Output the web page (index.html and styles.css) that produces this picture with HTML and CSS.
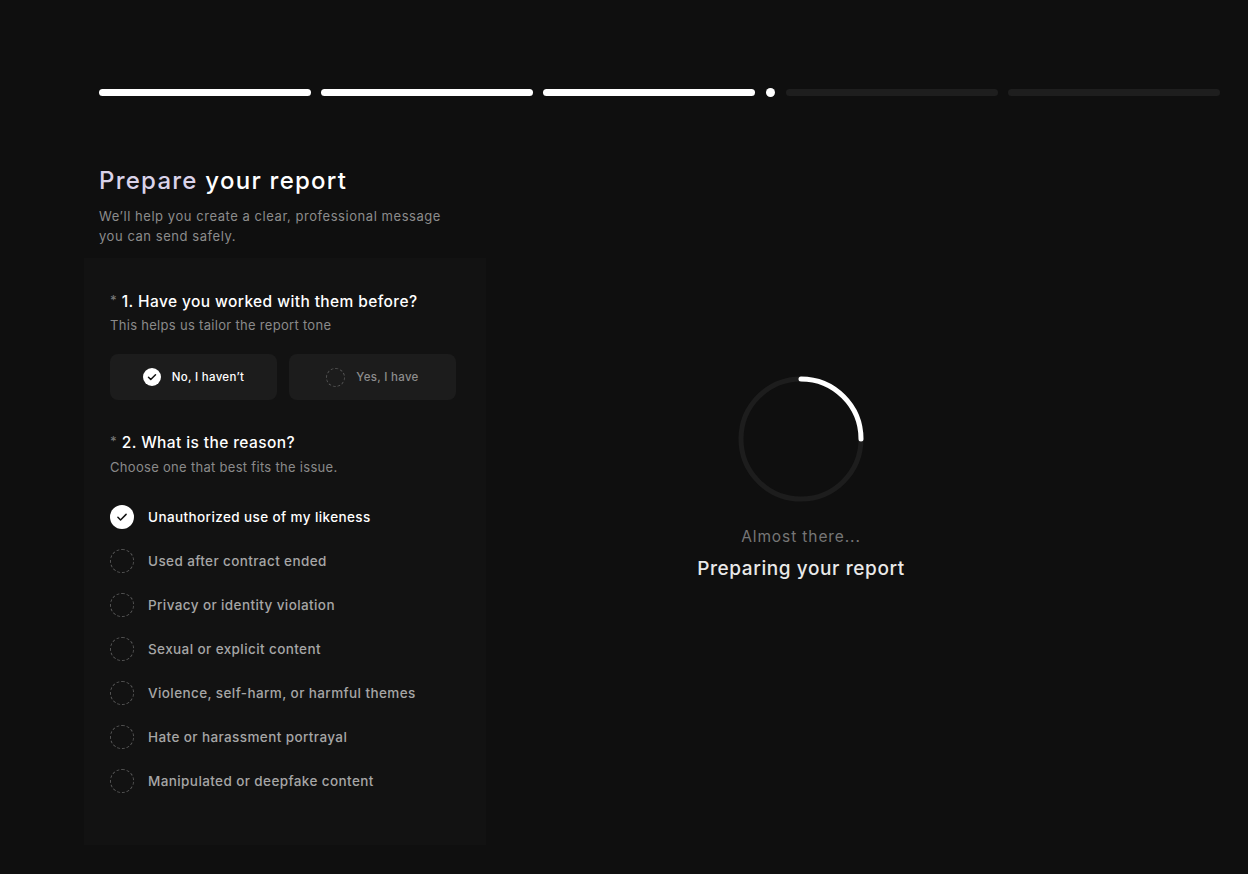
FILE: index.html
```html
<!DOCTYPE html>
<html lang="en">
<head>
  <meta charset="UTF-8" />
  <meta name="viewport" content="width=device-width, initial-scale=1.0" />
  <title>Prepare your report</title>
  <link rel="stylesheet" href="styles.css">
</head>
<body>

<div class="page">
  <!-- step progress -->
  <div class="progress">
    <span class="bar done"></span>
    <span class="bar done"></span>
    <span class="bar done"></span>
    <span class="dot"></span>
    <span class="bar"></span>
    <span class="bar"></span>
  </div>

  <div class="main">
    <div class="left">
      <div class="intro">
        <h1><span class="accent">Prepare</span> your report</h1>
        <p>We’ll help you create a clear, professional message<br>you can send safely.</p>
      </div>

      <div class="card">
        <div class="question">
          <h2><span class="req">*</span> 1. Have you worked with them before?</h2>
          <p class="hint">This helps us tailor the report tone</p>
          <div class="choices">
            <div class="choice selected">
              <span class="tick small">
                <svg viewBox="0 0 24 24" width="12" height="12"><path d="M5 12.5l4.5 4.5L19 7.5" fill="none" stroke="#111" stroke-width="3" stroke-linecap="round" stroke-linejoin="round"/></svg>
              </span>
              No, I haven’t
            </div>
            <div class="choice">
              <span class="ring small"></span>
              Yes, I have
            </div>
          </div>
        </div>

        <div class="question">
          <h2><span class="req">*</span> 2. What is the reason?</h2>
          <p class="hint">Choose one that best fits the issue.</p>
          <ul class="reasons">
            <li class="selected">
              <span class="tick">
                <svg viewBox="0 0 24 24" width="14" height="14"><path d="M5 12.5l4.5 4.5L19 7.5" fill="none" stroke="#111" stroke-width="2.6" stroke-linecap="round" stroke-linejoin="round"/></svg>
              </span>
              Unauthorized use of my likeness
            </li>
            <li><span class="ring"></span>Used after contract ended</li>
            <li><span class="ring"></span>Privacy or identity violation</li>
            <li><span class="ring"></span>Sexual or explicit content</li>
            <li><span class="ring"></span>Violence, self-harm, or harmful themes</li>
            <li><span class="ring"></span>Hate or harassment portrayal</li>
            <li><span class="ring"></span>Manipulated or deepfake content</li>
          </ul>
        </div>
      </div>
    </div>

    <div class="right">
      <svg class="spinner" viewBox="0 0 128 128" width="128" height="128">
        <circle cx="64" cy="64" r="60" fill="none" stroke="#1d1d1d" stroke-width="5"/>
        <path d="M64 4 A60 60 0 0 1 124 64" fill="none" stroke="#fff" stroke-width="5" stroke-linecap="round"/>
      </svg>
      <div class="status-small">Almost there...</div>
      <div class="status-big">Preparing your report</div>
    </div>
  </div>
</div>

</body>
</html>
```

FILE: styles.css
```css
/* --- Base --- */
body {
  margin: 0;
  background-color: #0f0f0f;
  color: #ffffff;
  font-family: Inter, "Noto Sans", sans-serif;
}

.page {
  padding: 88px 0 0 84px;
}

/* --- Progress steps --- */
.progress {
  display: flex;
  align-items: center;
  gap: 10px;
  margin-left: 15px;
  width: 1121px;
}

.bar {
  flex: 1;
  height: 7px;
  border-radius: 4px;
  background: #1e1e1e;
}

.bar.done {
  background: #ffffff;
}

.dot {
  width: 9px;
  height: 9px;
  border-radius: 50%;
  background: #ffffff;
  margin: 0 1px;
}

.main {
  display: flex;
  margin-top: 68px;
}

/* --- Left column --- */
.left {
  width: 402px;
}

.intro {
  padding-left: 15px;
}

.intro h1 {
  margin: 0;
  font-size: 24px;
  font-weight: 500;
  letter-spacing: 1.25px;
  line-height: 32px;
}

.accent {
  color: #d9d2e9;
}

.intro p {
  margin: 9px 0 0;
  font-size: 13px;
  line-height: 20px;
  letter-spacing: 0.55px;
  color: #8c8c8c;
}

.card {
  margin-top: 12px;
  background: #121212;
  padding: 30px 30px 46px 26px;
  min-height: 511px;
}

.question h2 {
  margin: 0;
  font-size: 15.5px;
  font-weight: 500;
  letter-spacing: 0.4px;
  line-height: 24px;
}

.req {
  color: #777;
  font-size: 13px;
  vertical-align: 2px;
}

.hint {
  margin: 1px 0 0;
  font-size: 13px;
  letter-spacing: 0.3px;
  color: #8a8a8a;
  line-height: 20px;
}

.question + .question .hint {
  margin-top: 2px;
}

.choices {
  display: flex;
  gap: 12px;
  margin: 19px 0 29px;
}

.choice {
  flex: 1;
  height: 46px;
  border-radius: 8px;
  background: #1c1c1c;
  display: flex;
  align-items: center;
  justify-content: center;
  gap: 11px;
  font-size: 11.5px;
  font-weight: 500;
  letter-spacing: 0.3px;
  color: #8d8d8d;
}

.choice.selected {
  color: #ffffff;
}

.tick {
  width: 24px;
  height: 24px;
  border-radius: 50%;
  background: #ffffff;
  display: flex;
  align-items: center;
  justify-content: center;
  flex-shrink: 0;
}

.ring {
  width: 22px;
  height: 22px;
  border-radius: 50%;
  border: 1px dashed #555;
  flex-shrink: 0;
}

.tick.small {
  width: 18px;
  height: 18px;
}

.ring.small {
  width: 17px;
  height: 17px;
}

/* --- Reason list --- */
.reasons {
  list-style: none;
  margin: 28px 0 0;
  padding: 0;
  display: flex;
  flex-direction: column;
  gap: 20px;
}

.reasons li {
  display: flex;
  align-items: center;
  gap: 14px;
  height: 24px;
  font-size: 13.5px;
  font-weight: 500;
  letter-spacing: 0.4px;
  color: #a6a6a6;
}

.reasons li.selected {
  color: #ffffff;
}

/* --- Right column: loader --- */
.right {
  width: 630px;
  display: flex;
  flex-direction: column;
  align-items: center;
  padding-top: 210px;
}

.status-small {
  margin-top: 24px;
  font-size: 15.5px;
  letter-spacing: 0.9px;
  color: #767676;
}

.status-big {
  margin-top: 11px;
  font-size: 19px;
  font-weight: 500;
  letter-spacing: 0.6px;
  color: #e9e9e9;
}
```
